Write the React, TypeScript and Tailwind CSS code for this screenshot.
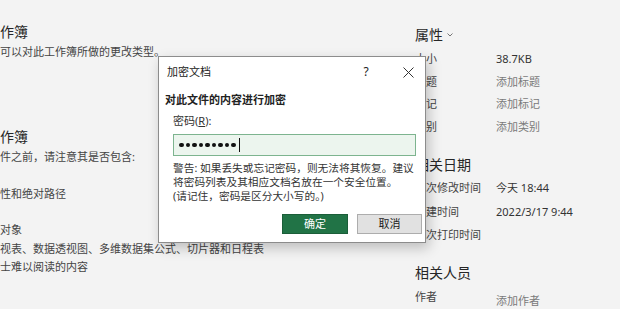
import React from "react";

const font = '"Noto Sans","Noto Sans CJK SC",sans-serif';

function PropRow({ label, value, muted, h }: { label: string; value?: string; muted?: boolean; h: string }) {
	return (
		<div className={`flex items-center ${h}`}>
			<div className="w-[81px] shrink-0 text-[11px] text-[#444]">{label}</div>
			<div className={`text-[11px] ${muted ? "text-[#7a7a7a]" : "text-[#333]"}`}>{value}</div>
		</div>
	);
}

function EncryptDialog() {
	return (
		<div className="absolute left-[158px] top-[56px] w-[268px] h-[187px] bg-white border border-[#8c8c8c] shadow-[3px_5px_12px_rgba(0,0,0,0.22)] flex flex-col">
			<div className="flex items-center h-[30px] pl-[8px] text-[11px] text-[#222]">
				<span>加密文档</span>
				<span className="ml-auto w-[14px] text-center text-[12px]">?</span>
				<svg className="ml-[30px] mr-[11px]" width="11" height="11" viewBox="0 0 11 11">
					<path d="M0.5 0.5L10.5 10.5M10.5 0.5L0.5 10.5" stroke="#333" strokeWidth="1" />
				</svg>
			</div>
			<div className="pl-[6px] mt-[4px] h-[18px] leading-[18px] text-[11px] font-semibold text-[#222]">对此文件的内容进行加密</div>
			<div className="pl-[14px] mt-[3px] h-[18px] leading-[18px] text-[11px] text-[#333]">
				密码(<span className="underline">R</span>):
			</div>
			<div className="ml-[14px] mt-[4px] w-[243px] h-[22px] border border-[#7db48f] bg-[#ecf5ee] flex items-center pl-[5px] gap-[2px]">
				{Array.from({ length: 9 }).map((_, i) => (
					<div key={i} className="w-[4.5px] h-[4.5px] rounded-full bg-[#111]" />
				))}
				<div className="ml-[1px] w-[1px] h-[14px] bg-[#111]" />
			</div>
			<div className="pl-[14px] mt-[5px] text-[10.7px] leading-[14px] text-[#333]">
				<div>警告: 如果丢失或忘记密码，则无法将其恢复。建议</div>
				<div>将密码列表及其相应文档名放在一个安全位置。</div>
				<div>(请记住，密码是区分大小写的。)</div>
			</div>
			<div className="flex justify-end gap-[9px] mt-[11px] pr-[3px]">
				<button className="w-[66px] h-[20px] bg-[#217346] text-white text-[11px] border border-[#1b5e39]">确定</button>
				<button className="w-[65px] h-[20px] bg-[#e1e1e1] text-[#222] text-[11px] border border-[#adadad]">取消</button>
			</div>
		</div>
	);
}

export default function App() {
	return (
		<div className="relative w-[620px] h-[309px] overflow-hidden bg-[#f3f3f3] flex" style={{ fontFamily: font }}>
			<div className="w-[415px] shrink-0 flex flex-col">
				<div className="mt-[22px] h-[20px] leading-[20px] text-[14px] text-[#262626]">作簿</div>
				<div className="h-[20px] leading-[20px] text-[11px] text-[#444]">可以对此工作簿所做的更改类型。</div>
				<div className="mt-[65px] h-[20px] leading-[20px] text-[14px] text-[#262626]">作簿</div>
				<div className="h-[20px] leading-[20px] text-[11px] text-[#444]">件之前，请注意其是否包含:</div>
				<div className="mt-[17px] h-[20px] leading-[20px] text-[11px] text-[#444]">性和绝对路径</div>
				<div className="mt-[17px] text-[11px] leading-[18.5px] text-[#444]">
					<div>对象</div>
					<div>视表、数据透视图、多维数据集公式、切片器和日程表</div>
					<div>士难以阅读的内容</div>
				</div>
			</div>
			<div className="flex-1 flex flex-col">
				<div className="mt-[24px] h-[20px] flex items-center text-[14px] text-[#262626]">
					属性
					<svg className="ml-[4px] mt-[2px]" width="6" height="4" viewBox="0 0 6 4">
						<path d="M0.5 0.5L3 3L5.5 0.5" stroke="#666" fill="none" strokeWidth="0.9" />
					</svg>
				</div>
				<div className="mt-[4px]">
					<PropRow label="大小" value="38.7KB" h="h-[22.7px]" />
					<PropRow label="标题" value="添加标题" muted h="h-[22.7px]" />
					<PropRow label="标记" value="添加标记" muted h="h-[22.7px]" />
					<PropRow label="类别" value="添加类别" muted h="h-[22.7px]" />
				</div>
				<div className="mt-[16px] h-[20px] leading-[20px] text-[14px] text-[#262626]">相关日期</div>
				<div className="mt-[2px]">
					<PropRow label="上次修改时间" value="今天 18:44" h="h-[23.5px]" />
					<PropRow label="创建时间" value="2022/3/17 9:44" h="h-[23.5px]" />
					<PropRow label="上次打印时间" h="h-[23.5px]" />
				</div>
				<div className="mt-[16px] h-[20px] leading-[20px] text-[14px] text-[#262626]">相关人员</div>
				<div className="flex h-[24px] items-center mt-[2px]">
					<div className="w-[81px] shrink-0 text-[11px] text-[#444]">作者</div>
					<div className="pt-[8px] text-[11px] text-[#7a7a7a]">添加作者</div>
				</div>
			</div>
			<EncryptDialog />
		</div>
	);
}
